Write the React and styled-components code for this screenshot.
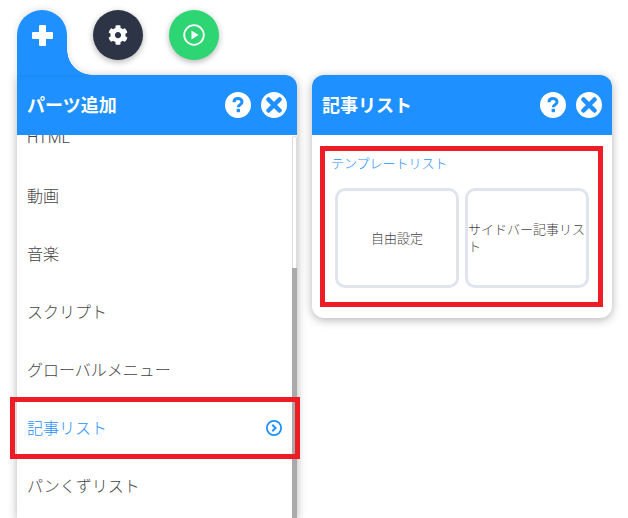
import React from 'react';
import styled, { createGlobalStyle } from 'styled-components';

const Global = createGlobalStyle`
  html, body { margin: 0; padding: 0; background: #fff; }
  body { font-family: "Roboto", "Noto Sans CJK JP", sans-serif; }
  * { box-sizing: border-box; }
`;
const Page = styled.div`
  width: 628px; height: 518px; overflow: hidden; position: relative;
  padding: 10px 0 0 17px;
`;
const Tools = styled.div`
  display: flex; height: 65px; position: relative; z-index: 2;
`;
const PlusTab = styled.div`
  width: 50px; height: 65px; background: #1e90ff; border-radius: 25px 25px 0 0;
  position: relative; display: flex; justify-content: center; padding-top: 15px; color: #fff;
  filter: drop-shadow(0 -1px 3px rgba(0,0,0,.12));
  &::after {
    content: ""; position: absolute; left: 50px; bottom: 0; width: 25px; height: 25px;
    background: radial-gradient(circle at 100% 0, transparent 24.5px, #1e90ff 25px);
  }
`;
const RoundBtn = styled.div`
  width: 50px; height: 50px; border-radius: 50%; background: ${p => p.$bg};
  box-shadow: 0 2px 6px rgba(0,0,0,.3); display: flex; align-items: center; justify-content: center;
  color: #fff; margin-left: ${p => p.$ml}px;
`;
const Panels = styled.div`
  display: flex; align-items: flex-start; gap: 15px;
`;
const Panel = styled.section`
  width: ${p => p.$w}px; background: #fff; box-shadow: 0 2px 10px rgba(0,0,0,.3);
  border-radius: ${p => p.$tabbed ? '0 12px 0 0' : '12px'}; overflow: hidden;
  ${p => p.$tabbed ? 'height: 443px;' : ''}
`;
const Header = styled.header`
  height: 60px; background: #1e90ff; display: flex; align-items: center;
  padding: 0 10px; gap: 10px; position: relative; z-index: 1;
`;
const Title = styled.h2`
  margin: 2px auto 0 0; font-size: 18px; font-weight: 700; color: #fff; line-height: 1;
`;
const HeadBtn = styled.div`
  width: 26px; height: 26px; border-radius: 50%; background: #fff; color: #1e90ff;
  display: flex; align-items: center; justify-content: center;
`;
const ListWrap = styled.div`
  height: 383px; overflow: hidden; position: relative;
`;
const List = styled.ul`
  list-style: none; margin: -26px 0 0; padding: 0;
`;
const Item = styled.li`
  height: 58px; display: flex; align-items: center; justify-content: space-between;
  padding: 0 15px 2px 10px; font-size: 16px; font-weight: 300;
  color: ${p => p.$active ? '#1e90ff' : '#444'};
  svg { margin-top: 2px; }
`;
const Thumb = styled.div`
  position: absolute; right: 0; top: 133px; bottom: 0; width: 5px; background: #aaa;
`;
const Track = styled.div`
  position: absolute; right: 0; top: 1px; bottom: 0; width: 5px; background: #fff;
  border: 1px solid #ddd; border-radius: 2px;
`;
const Body = styled.div`
  padding: 19px 14px 30px;
`;
const Label = styled.div`
  font-size: 13px; font-weight: 300; color: #1e90ff; line-height: 20px; padding-left: 5px;
`;
const Grid = styled.div`
  display: flex; gap: 6px; margin-top: 14px; padding-left: 9px;
`;
const Card = styled.div`
  width: 124px; height: 100px; border: 3px solid #e0e5ed; border-radius: 10px;
  display: flex; align-items: center; justify-content: ${p => p.$center ? 'center' : 'flex-start'};
  font-size: 13px; font-weight: 300; line-height: 17px; color: #444; background: #fff;
  text-align: ${p => p.$center ? 'center' : 'left'};
`;
const Mark = styled.div`
  position: absolute; left: ${p => p.$x}px; top: ${p => p.$y}px; width: ${p => p.$w}px; height: ${p => p.$h}px;
  border: 5px solid #ee1c25; z-index: 5; pointer-events: none;
`;

const Plus = () => (
  <svg width="21" height="21" viewBox="0 0 21 21"><path d="M7 1a1 1 0 0 1 1-1h5a1 1 0 0 1 1 1v6h6a1 1 0 0 1 1 1v5a1 1 0 0 1-1 1h-6v6a1 1 0 0 1-1 1H8a1 1 0 0 1-1-1v-6H1a1 1 0 0 1-1-1V8a1 1 0 0 1 1-1h6z" fill="currentColor"/></svg>
);
const Gear = () => (
  <svg width="20" height="20" viewBox="0 0 512 512"><path fill="currentColor" d="M487.4 315.7l-42.6-24.6c4.3-23.2 4.3-47 0-70.2l42.6-24.6c4.9-2.8 7.1-8.6 5.5-14-11.1-35.6-30-67.8-54.7-94.6-3.8-4.1-10-5.1-14.8-2.3L380.8 110c-17.9-15.4-38.5-27.3-60.8-35.1V25.8c0-5.6-3.9-10.5-9.4-11.7-36.7-8.2-74.3-7.8-109.2 0-5.5 1.2-9.4 6.1-9.4 11.7V75c-22.2 7.9-42.8 19.8-60.8 35.1L88.7 85.5c-4.9-2.8-11-1.9-14.8 2.3-24.7 26.7-43.6 58.9-54.7 94.6-1.7 5.4.6 11.2 5.5 14L67.3 221c-4.3 23.2-4.3 47 0 70.2l-42.6 24.6c-4.9 2.8-7.1 8.6-5.5 14 11.1 35.6 30 67.8 54.7 94.6 3.8 4.1 10 5.1 14.8 2.3l42.6-24.6c17.9 15.4 38.5 27.3 60.8 35.1v49.2c0 5.6 3.9 10.5 9.4 11.7 36.7 8.2 74.3 7.8 109.2 0 5.5-1.2 9.4-6.1 9.4-11.7v-49.2c22.2-7.9 42.8-19.8 60.8-35.1l42.6 24.6c4.9 2.8 11 1.9 14.8-2.3 24.7-26.7 43.6-58.9 54.7-94.6 1.5-5.5-.7-11.3-5.6-14.1zM256 336c-44.1 0-80-35.9-80-80s35.9-80 80-80 80 35.9 80 80-35.9 80-80 80z"/></svg>
);
const PlayCircle = () => (
  <svg width="22" height="22" viewBox="0 0 22 22"><circle cx="11" cy="11" r="9.8" fill="none" stroke="currentColor" strokeWidth="1.8"/><path d="M8.500 6.500l7 4.500-7 4.500z" fill="currentColor"/></svg>
);
const Question = () => (
  <svg width="16" height="18" viewBox="0 0 16 18"><path d="M4 6.200C4 3.900 5.800 2.600 8 2.600s4 1.300 4 3.400c0 2.800-3.700 2.800-3.700 5.200" fill="none" stroke="currentColor" strokeWidth="3"/><rect x="6.600" y="12.800" width="3.400" height="3.400" rx=".8" fill="currentColor"/></svg>
);
const Cross = () => (
  <svg width="16" height="16" viewBox="0 0 16 16"><path d="M2.500 2.500l11 11M13.500 2.500l-11 11" stroke="currentColor" strokeWidth="4.500" strokeLinecap="round"/></svg>
);
const Chevron = () => (
  <svg width="16" height="16" viewBox="0 0 16 16"><circle cx="8" cy="8" r="7.100" fill="none" stroke="#1e90ff" strokeWidth="1.800"/><path d="M6.300 4.800L9.500 8l-3.200 3.200" fill="none" stroke="#1e90ff" strokeWidth="2"/></svg>
);

const items = ['HTML', '動画', '音楽', 'スクリプト', 'グローバルメニュー', '記事リスト', 'パンくずリスト'];

export default function App() {
  return (
    <Page>
      <Global />
      <Tools>
        <PlusTab><Plus /></PlusTab>
        <RoundBtn $bg="#2d3446" $ml={26}><Gear /></RoundBtn>
        <RoundBtn $bg="#2ed573" $ml={26}><PlayCircle /></RoundBtn>
      </Tools>
      <Panels>
        <Panel $w={280} $tabbed>
          <Header>
            <Title>パーツ追加</Title>
            <HeadBtn><Question /></HeadBtn>
            <HeadBtn><Cross /></HeadBtn>
          </Header>
          <ListWrap>
            <List>
              {items.map(t => (
                <Item key={t} $active={t === '記事リスト'}>
                  {t}
                  {t === '記事リスト' && <Chevron />}
                </Item>
              ))}
            </List>
            <Track />
            <Thumb />
          </ListWrap>
        </Panel>
        <Panel $w={300}>
          <Header>
            <Title>記事リスト</Title>
            <HeadBtn><Question /></HeadBtn>
            <HeadBtn><Cross /></HeadBtn>
          </Header>
          <Body>
            <Label>テンプレートリスト</Label>
            <Grid>
              <Card $center>自由設定</Card>
              <Card>サイドバー記事リスト</Card>
            </Grid>
          </Body>
        </Panel>
      </Panels>
      <Mark $x={10} $y={397} $w={290} $h={62} />
      <Mark $x={320} $y={146} $w={283} $h={161} />
    </Page>
  );
}
